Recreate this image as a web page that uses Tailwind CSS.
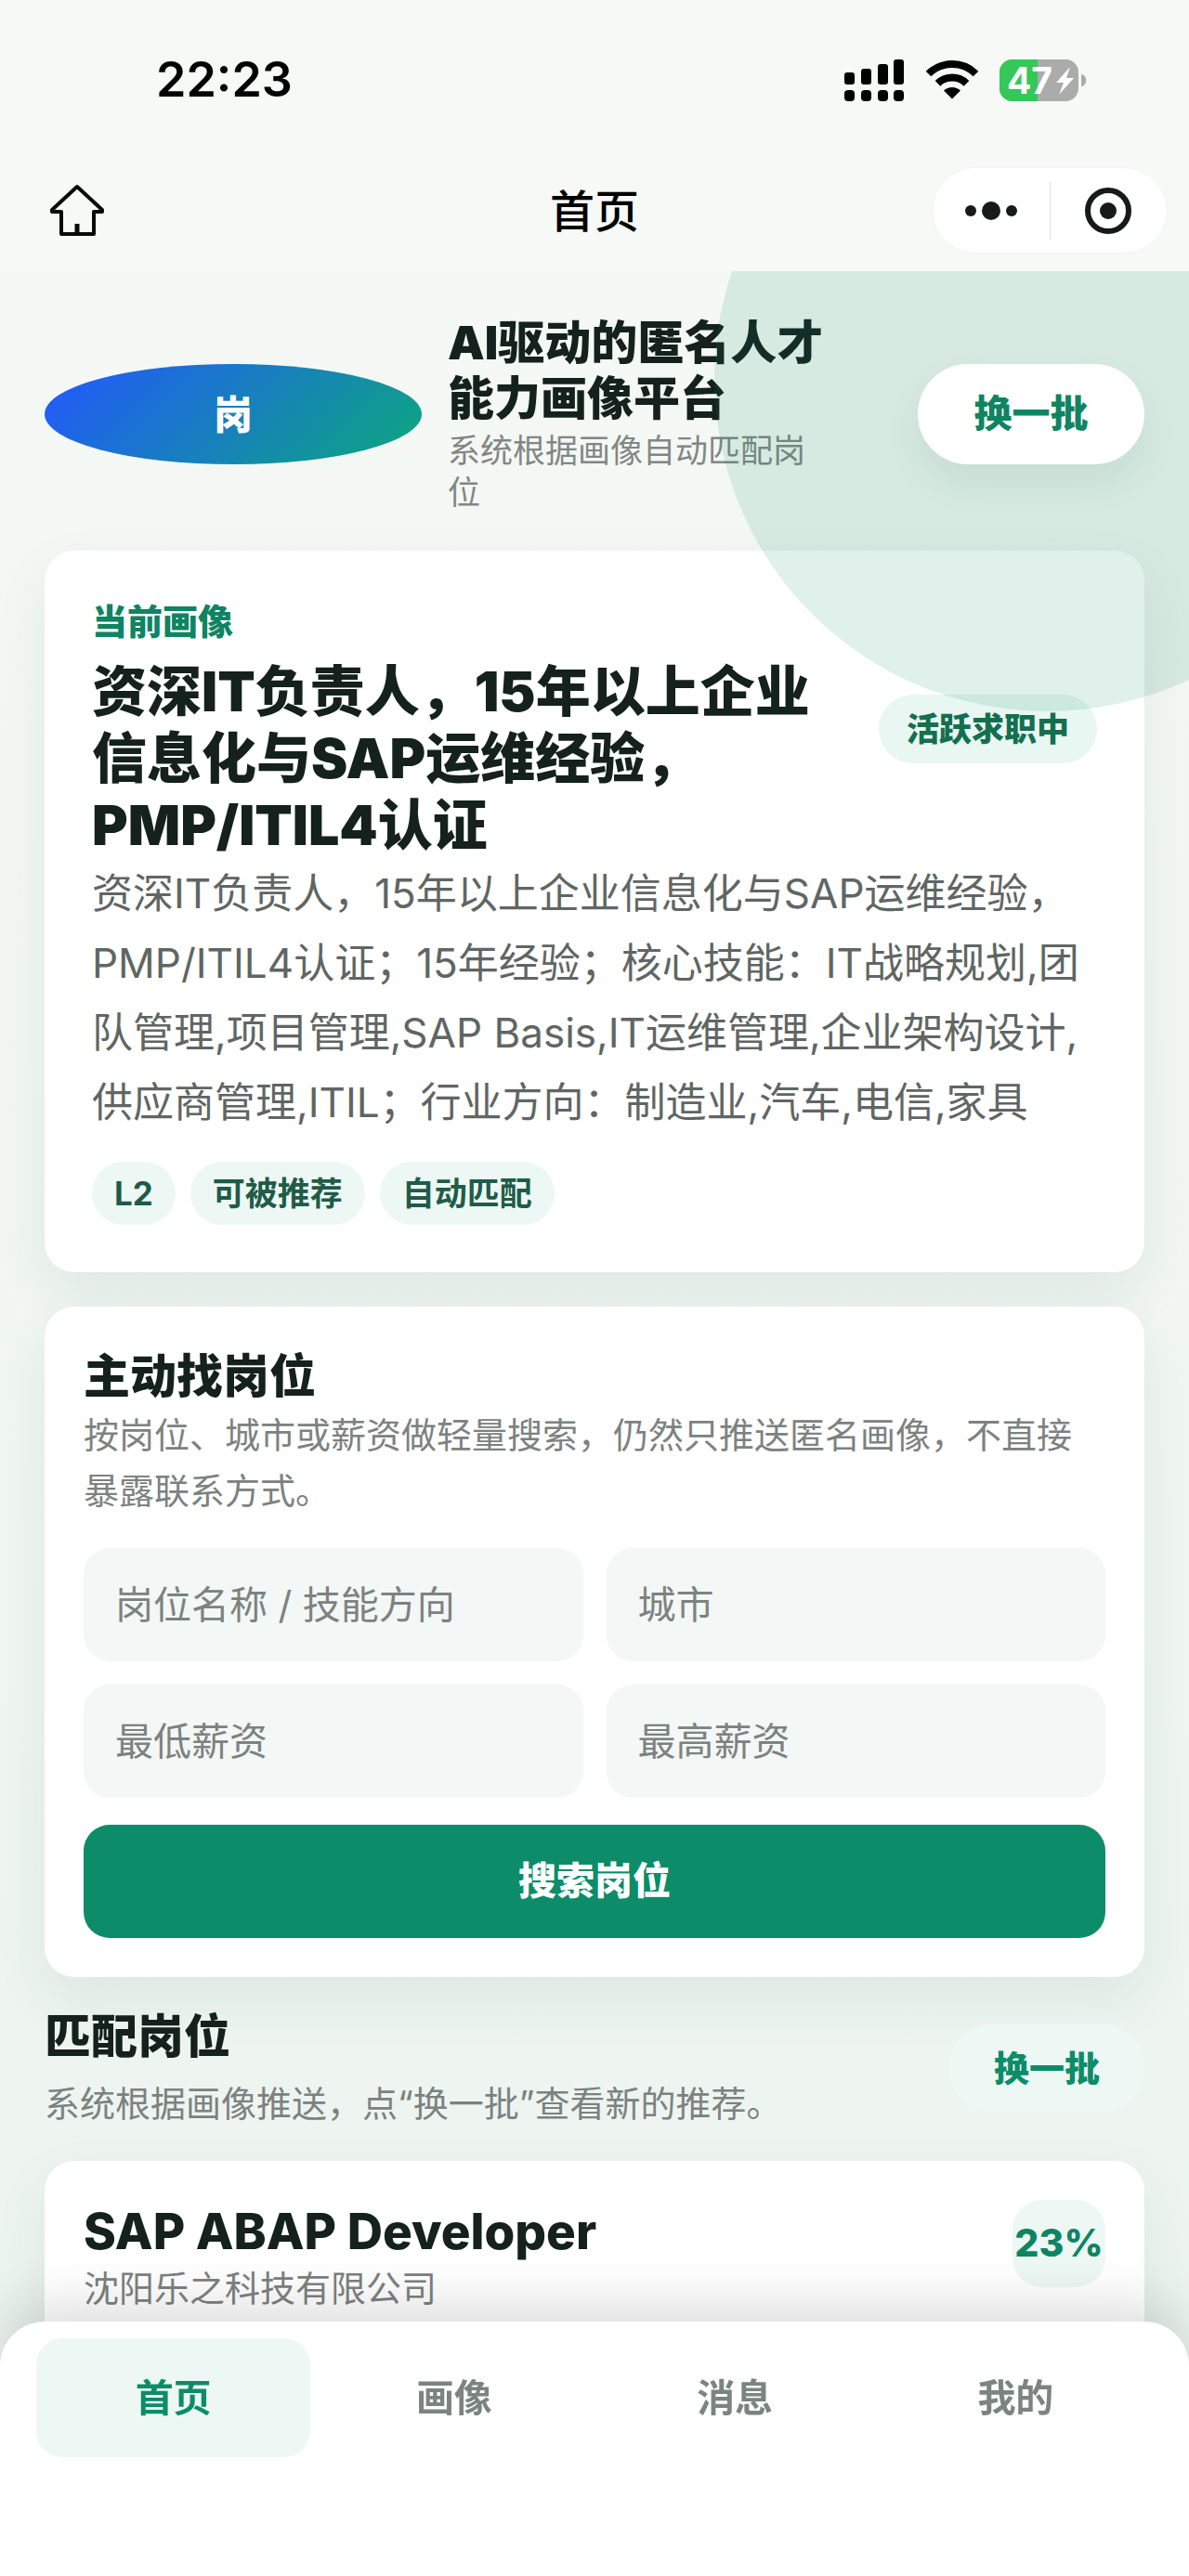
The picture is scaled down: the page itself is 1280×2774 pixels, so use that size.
<!DOCTYPE html>
<html lang="zh-CN">
<head>
  <meta charset="UTF-8" />
  <meta name="viewport" content="width=device-width, initial-scale=1.0"/>
  <title>首页</title>
  <script src="https://cdn.jsdelivr.net/npm/@tailwindcss/browser@4"></script>
</head>
<body class="min-h-screen flex flex-col bg-linear-to-b from-[#f6f9f6] to-[#ecf4ef] text-[#14211d] font-['Inter','Noto_Sans_CJK_SC',sans-serif]">

  <!-- Status bar + nav bar -->
  <header class="bg-[#f6f9f6]">
    <div class="h-[172px] pl-[168px] pr-[110px] flex items-center justify-between">
      <time class="text-[52px] leading-[60px] font-semibold text-black">22:23</time>
      <div class="flex items-center gap-[22px]">
        <svg class="w-[65px] h-[45px]" viewBox="0 0 65 45" fill="#000" aria-hidden="true">
          <rect x="0" y="14" width="11" height="13" rx="3"/>
          <rect x="18" y="10" width="11" height="17" rx="3"/>
          <rect x="36" y="5" width="11" height="22" rx="3"/>
          <rect x="53" y="0" width="11" height="27" rx="3"/>
          <rect x="0" y="33" width="11" height="12" rx="4"/>
          <rect x="18" y="33" width="11" height="12" rx="4"/>
          <rect x="36" y="33" width="11" height="12" rx="4"/>
          <rect x="53" y="33" width="11" height="12" rx="4"/>
        </svg>
        <svg class="w-[58px] h-[42px]" viewBox="0 0 58 42" aria-hidden="true">
          <path d="M3.5 14.5a36.5 36.5 0 0 1 51 0M13.5 24.8a22.2 22.2 0 0 1 31 0" fill="none" stroke="#000" stroke-width="8"/>
          <path d="M20 32.500a13 13 0 0 1 18 0l-9 9z" fill="#000"/>
        </svg>
        <svg class="w-[94px] h-[45px]" viewBox="0 0 94 45" aria-hidden="true">
          <rect width="85" height="45" rx="14" fill="#ababab"/>
          <path d="M14 0h27v45H14a14 14 0 0 1-14-14V14A14 14 0 0 1 14 0z" fill="#34c759"/>
          <path d="M88 16c7 1 7 12 0 13z" fill="#ababab"/>
          <text x="8" y="37" font-size="39" font-weight="700" fill="#fff">47</text>
          <path d="M76 8L61 25h8l-5 13 16-18h-8z" fill="#fff"/>
        </svg>
      </div>
    </div>
    <div class="h-[120px] px-[23px] grid grid-cols-[1fr_auto_1fr] items-start">
      <button aria-label="返回首页" class="w-[58px] ml-[31px] mt-[26px]">
        <svg class="w-[58px] h-[58px]" viewBox="0 0 58 58" fill="none" stroke="#0a0a0a" stroke-width="4" stroke-linejoin="round" aria-hidden="true">
          <path d="M29 3L2 28v2h10v24h35V30h9v-2z"/>
          <path d="M29 43v10" stroke-width="5"/>
        </svg>
      </button>
      <h1 class="mt-[22px] text-[48px] leading-[68px] font-medium text-black">首页</h1>
      <div class="justify-self-end mt-2 w-[254px] h-[93px] rounded-full bg-white border border-[#f1f4f1] flex items-center">
        <button aria-label="更多" class="flex-1 flex justify-center">
          <svg class="w-[60px] h-[24px]" viewBox="0 0 60 24" fill="#161a18" aria-hidden="true">
            <circle cx="8" cy="12" r="6"/><circle cx="30" cy="12" r="10"/><circle cx="52" cy="12" r="6"/>
          </svg>
        </button>
        <span class="w-px h-[64px] bg-[#dfe2e0]"></span>
        <button aria-label="关闭" class="flex-1 flex justify-center">
          <svg class="w-[52px] h-[52px]" viewBox="0 0 52 52" aria-hidden="true">
            <circle cx="26" cy="26" r="22" fill="none" stroke="#161a18" stroke-width="6"/>
            <circle cx="26" cy="26" r="9" fill="#161a18"/>
          </svg>
        </button>
      </div>
    </div>
  </header>

  <main class="relative flex-1 overflow-hidden px-[48px] pt-[47px] pb-[200px]">
    <!-- Decorative circle -->
    <div class="absolute z-10 -right-[206px] -top-[243px] w-[717px] h-[717px] rounded-full bg-[#0f8a66]/13 pointer-events-none"></div>

    <!-- Brand row -->
    <section class="flex items-center gap-7">
      <div class="w-[406px] h-[108px] shrink-0 rounded-[50%] bg-linear-135/srgb from-[#2357ff] to-[#0ca87c] flex items-center justify-center text-[42px] font-black text-white">岗</div>
      <div class="max-w-[416px]">
        <h2 class="text-[50px] leading-[60px] font-black">AI驱动的匿名人才能力画像平台</h2>
        <p class="mt-1 text-[35px] leading-[45px] text-[#828784]">系统根据画像自动匹配岗位</p>
      </div>
      <button class="relative z-20 ml-auto w-[244px] h-[108px] shrink-0 rounded-full bg-white text-[41px] font-extrabold text-[#0f8463] shadow-[0_20px_40px_rgba(20,60,48,0.08)]">换一批</button>
    </section>

    <!-- Current profile -->
    <section class="mt-10 p-[51px] rounded-[32px] bg-white shadow-[0_24px_60px_rgba(20,60,48,0.08)]">
      <div class="flex items-center justify-between gap-9">
        <div>
          <p class="text-[38px] leading-[50px] font-extrabold text-[#0f8463]">当前画像</p>
          <h2 class="mt-[15px] text-[59px] leading-[72px] font-black">资深IT负责人，15年以上企业信息化与SAP运维经验，PMP/ITIL4认证</h2>
        </div>
        <span class="shrink-0 px-[30px] rounded-full bg-[#e9f7f2] text-[35px] leading-[74px] font-extrabold text-[#12704f]">活跃求职中</span>
      </div>
      <p class="text-[44px] leading-[75px] text-[#5f6663]">资深IT负责人，15年以上企业信息化与SAP运维经验，PMP/ITIL4认证；15年经验；核心技能：IT战略规划,团队管理,项目管理,SAP Basis,IT运维管理,企业架构设计,供应商管理,ITIL；行业方向：制造业,汽车,电信,家具</p>
      <ul class="mt-[26px] flex gap-4 text-[35px] leading-[68px] font-bold text-[#1f5c48]">
        <li class="px-6 rounded-full bg-[#edf8f5]">L2</li>
        <li class="px-6 rounded-full bg-[#edf8f5]">可被推荐</li>
        <li class="px-6 rounded-full bg-[#edf8f5]">自动匹配</li>
      </ul>
    </section>

    <!-- Search form -->
    <form class="mt-[37px] p-[42px] rounded-[32px] bg-white shadow-[0_24px_60px_rgba(20,60,48,0.08)]">
      <h2 class="text-[50px] leading-[66px] font-black">主动找岗位</h2>
      <p class="text-[38px] leading-[60px] text-[#7c8280]">按岗位、城市或薪资做轻量搜索，仍然只推送匿名画像，不直接暴露联系方式。</p>
      <div class="mt-8 grid grid-cols-2 gap-[25px]">
        <input type="text" aria-label="岗位名称 / 技能方向" placeholder="岗位名称 / 技能方向" class="min-w-0 h-[122px] px-[34px] rounded-[28px] bg-[#f3f7f5] text-[41px] placeholder:text-[#7c8280]"/>
        <input type="text" aria-label="城市" placeholder="城市" class="min-w-0 h-[122px] px-[34px] rounded-[28px] bg-[#f3f7f5] text-[41px] placeholder:text-[#7c8280]"/>
        <input type="text" aria-label="最低薪资" placeholder="最低薪资" class="min-w-0 h-[122px] px-[34px] rounded-[28px] bg-[#f3f7f5] text-[41px] placeholder:text-[#7c8280]"/>
        <input type="text" aria-label="最高薪资" placeholder="最高薪资" class="min-w-0 h-[122px] px-[34px] rounded-[28px] bg-[#f3f7f5] text-[41px] placeholder:text-[#7c8280]"/>
      </div>
      <button type="button" class="mt-[29px] w-full h-[122px] rounded-[28px] bg-[#0c8c69] text-[41px] font-extrabold text-white">搜索岗位</button>
    </form>

    <!-- Matched jobs -->
    <section>
      <div class="mt-[30px] flex items-center justify-between">
        <div>
          <h2 class="text-[50px] leading-[68px] font-black">匹配岗位</h2>
          <p class="mt-2 text-[38px] leading-[60px] text-[#7c8280]">系统根据画像推送，点“换一批”查看新的推荐。</p>
        </div>
        <button class="w-[210px] h-[94px] rounded-full bg-[#edf8f4] text-[38px] font-extrabold text-[#0c8c69]">换一批</button>
      </div>
      <article class="mt-8 p-[42px] flex items-start justify-between rounded-[32px] bg-white shadow-[0_24px_60px_rgba(20,60,48,0.08)]">
        <div>
          <h3 class="text-[53px] leading-[68px] font-extrabold">SAP ABAP Developer</h3>
          <p class="text-[38px] leading-[54px] text-[#7c8280]">沈阳乐之科技有限公司</p>
        </div>
        <span class="w-[100px] h-[94px] rounded-[32px] bg-[#edf8f4] flex items-center justify-center text-[41px] font-extrabold text-[#0f8463]">23%</span>
      </article>
    </section>
  </main>

  <!-- Tab bar -->
  <nav class="fixed inset-x-0 bottom-0 z-30 h-[274px] px-[39px] pt-[18px] grid grid-cols-4 items-start gap-[7px] rounded-t-[48px] bg-white text-[41px] leading-[128px] font-bold text-center text-[#7b8480] shadow-[0_-16px_60px_rgba(0,0,0,0.14)]">
    <a href="#" aria-current="page" class="rounded-[28px] bg-[#edf8f4] text-[#0c8c69]">首页</a>
    <a href="#">画像</a>
    <a href="#">消息</a>
    <a href="#">我的</a>
  </nav>

</body>
</html>
